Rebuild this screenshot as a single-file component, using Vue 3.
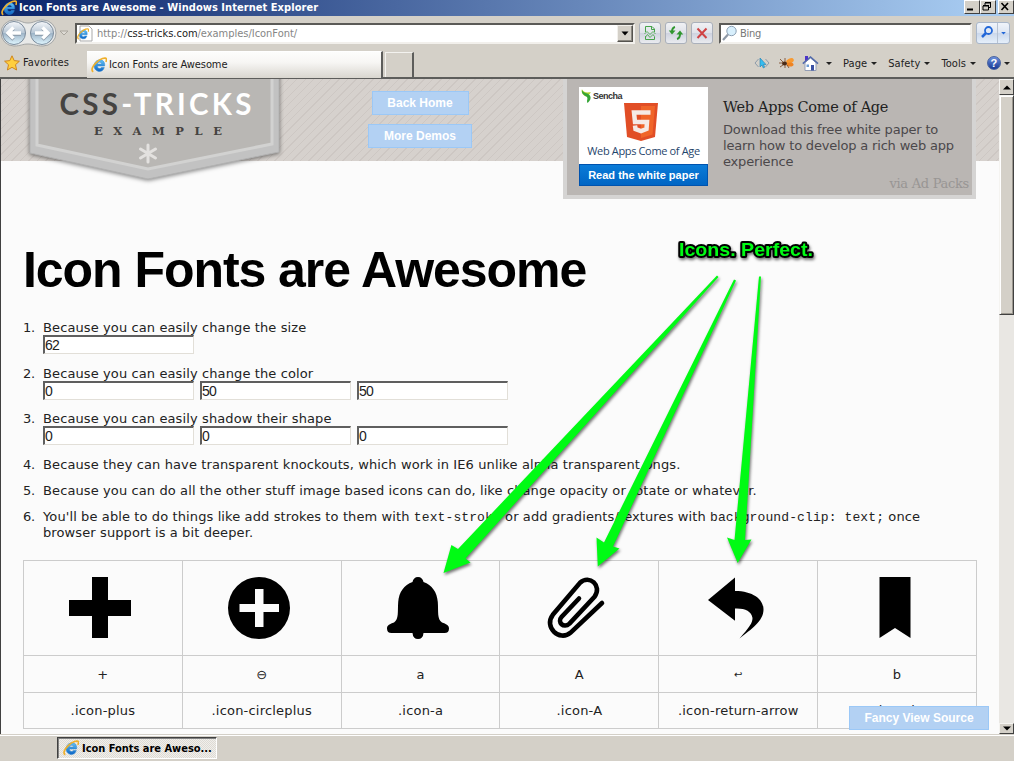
<script setup>
const items = [
  { text: 'Because you can easily change the size', fields: ['62'] },
  { text: 'Because you can easily change the color', fields: ['0', '50', '50'] },
  { text: 'Because you can easily shadow their shape', fields: ['0', '0', '0'] },
  { text: 'Because they can have transparent knockouts, which work in IE6 unlike alpha transparent pngs.' },
  { text: 'Because you can do all the other stuff image based icons can do, like change opacity or rotate or whatever.' },
]
const icons = [
  { key: '+', name: '.icon-plus', d: 'M23 0H39V23H62V39H39V61H23V39H0V23H23Z' },
  { key: '⊖', name: '.icon-circleplus', d: 'M31 0A31 31 0 1 1 31 62A31 31 0 1 1 31 0ZM27 12V27H11.500V35H27V50H35.500V35H51V27H35.500V12Z' },
  { key: 'a', name: '.icon-a', d: 'M31 0C34 0 36 2 36.500 5C45 8 50 15 50.800 25C51.500 35 50 42 55 45.500C59 47 62 48 62 51.500Q62 56 57.500 56H36.500Q36 62 31 62Q26 62 25.500 56H4.500Q0 56 0 51.500C0 48 3 47 7 45.500C12 42 10.500 35 11.200 25C12 15 17 8 25.500 5C26 2 28 0 31 0Z' },
  { key: 'A', name: '.icon-A', stroke: true, d: 'M56 26L24.400 55.800C13.500 65 -2.500 50 6.800 37.800L34 5.800C43.500 -3 56.500 9 48.500 19.800L23.500 46.600C17.500 52 11 45 15.500 40L33 21.500' },
  { key: '↩', name: '.icon-return-arrow', small: true, d: 'M3 23L30 0.500V14C47.500 14 58.500 22 58.500 32.500C58.500 44 46.500 52 34.500 61.500C44.500 50 47.500 46 47.500 41C46.500 34 39.500 31 30 31.500V43.800Z' },
  { key: 'b', name: '.icon-b', d: 'M15.500 0H46.500V61L31 51L15.500 61Z' },
]
const menus = ['Page', 'Safety', 'Tools']
</script>

<template>
  <div class="window">
    <svg class="defs" width="0" height="0">
      <defs>
        <linearGradient id="ieBlue" x1="0" y1="0" x2="0" y2="1">
          <stop offset="0" stop-color="#62c2f5" /><stop offset="1" stop-color="#0b63c4" />
        </linearGradient>
        <symbol id="ie" viewBox="0 0 16 16">
          <path d="M13.600 9H6.300C6.400 11.800 9.600 12.200 10.400 10.500H13.300C12 14.600 8.700 14.800 7 14.300C1.500 12.500 1.800 4.500 7.500 3C11.500 2 14.300 5 13.600 9ZM6.300 7H10.700C10.500 4.600 6.700 4.600 6.300 7Z" fill="url(#ieBlue)" stroke="#2a85d0" stroke-width=".5" />
          <path d="M2.300 14.800C-.3 13.500 1.500 9 5 5.800C9 2 14.800-.5 15.500 2.200C15.700 3 15.200 4.100 14.800 4.800" fill="none" stroke="#efb02c" stroke-width="1.700" />
        </symbol>
      </defs>
    </svg>

    <header class="titlebar">
      <svg class="ico16"><use href="#ie" /></svg>
      <span class="title">Icon Fonts are Awesome - Windows Internet Explorer</span>
      <div class="winbtns">
        <i class="wb"><svg viewBox="0 0 12 11"><path d="M2 8.500H8" stroke="#000" stroke-width="2" /></svg></i>
        <i class="wb"><svg viewBox="0 0 12 11"><path d="M4 2H9.500V6.500H8M4 1.500H10M4 2V4" fill="none" stroke="#000" /><path d="M2 5H7.500V9H2ZM2 4.500H8" fill="none" stroke="#000" /></svg></i>
        <i class="wb close"><svg viewBox="0 0 12 11"><path d="M2.500 2L9 9M9 2L2.500 9" stroke="#000" stroke-width="1.600" /></svg></i>
      </div>
    </header>

    <div class="navbar">
      <svg class="backfwd" viewBox="0 0 58 28">
        <defs>
          <linearGradient id="ball" x1="0" y1="0" x2="0" y2="1">
            <stop offset="0" stop-color="#f6f8fb" /><stop offset=".48" stop-color="#b9c8d6" /><stop offset=".52" stop-color="#9fb5c8" /><stop offset="1" stop-color="#dff6ff" />
          </linearGradient>
        </defs>
        <path d="M14 1C21 1 22 4 28 4S36 1 43 1A13 13 0 0 1 43 27C36 27 34 25 28 25S21 27 14 27A13 13 0 0 1 14 1Z" fill="#e8e9e8" stroke="#a3a5a5" />
        <circle cx="14" cy="14" r="11.500" fill="url(#ball)" stroke="#7c8c9c" />
        <circle cx="42" cy="14" r="11.500" fill="url(#ball)" stroke="#7c8c9c" />
        <path d="M21 14H9M13.500 8.500L8 14L13.500 19.500" class="navarrow" />
        <path d="M35 14H47M42.500 8.500L48 14L42.500 19.500" class="navarrow" />
      </svg>
      <svg class="hist" viewBox="0 0 10 6"><path d="M1 1H9L5 5Z" fill="#dedbd5" stroke="#aaa69e" /></svg>
      <div class="address">
        <svg class="doc" viewBox="0 0 17 17"><path d="M3 1H12L15 4V16H3Z" fill="#fff" stroke="#a9a9a9" /><use href="#ie" x="0" y="3" width="12" height="12" /></svg>
        <span class="url">http://<b>css-tricks.com</b>/examples/IconFont/</span>
        <i class="drop"><svg viewBox="0 0 8 5"><path d="M.5.5H7.500L4 4.500Z" /></svg></i>
      </div>
      <i class="tool"><svg viewBox="0 0 16 16"><path d="M3.500 7V1.500H10L12.500 4V7M9.500 1.500V4.500H12.500M3.500 11V14.500H12.500V11.500" fill="none" stroke="#47a34a" /><path d="M2.500 9L5 6.500L8 9.500L11 6.500L13.500 9M3.500 12L5.500 9.500L8 12.500L11 9.500L12.500 11.500" fill="none" stroke="#5bb05d" /></svg></i>
      <i class="tool"><svg viewBox="0 0 16 16"><path d="M7 2C4.500 2.500 4 4 4 7M9 14C11.500 13.500 12 12 12 9" fill="none" stroke="#2f962f" stroke-width="2" /><path d="M.8 5.500H7.500L4 9.500ZM8.500 9.500H15.200L12 5.500Z" fill="#2f962f" /></svg></i>
      <i class="tool"><svg viewBox="0 0 16 16"><path d="M3.500 3.500L12.500 13M12.500 3.500L3.500 13" stroke="#cf4344" stroke-width="2" /></svg></i>
      <div class="search">
        <svg viewBox="0 0 16 16"><path d="M1 15L6 9.500" stroke="#8d98a6" stroke-width="2.200" /><circle cx="9.500" cy="6" r="4.700" fill="#d8effc" stroke="#8b9fb3" /></svg>
        <span>Bing</span>
      </div>
      <div class="go">
        <svg viewBox="0 0 20 20"><path d="M5 14L9 10" stroke="#2267d8" stroke-width="2.500" /><circle cx="11.500" cy="7.500" r="3.500" fill="none" stroke="#2267d8" stroke-width="1.800" /></svg>
        <svg class="godrop" viewBox="0 0 12 20"><path d="M3.500 9H8.500L6 11.500Z" fill="#2267d8" /></svg>
      </div>
    </div>

    <div class="tabbar">
      <svg class="star" viewBox="0 0 16 16"><path d="M8 .8L10.200 5.600L15.400 6.200L11.500 9.700L12.600 15L8 12.300L3.400 15L4.500 9.700L.6 6.200L5.800 5.600Z" fill="#ffcf3f" stroke="#cf861d" /></svg>
      <span class="fav">Favorites</span>
      <div class="tab"><svg class="ico16"><use href="#ie" /></svg><span>Icon Fonts are Awesome</span></div>
      <div class="newtab"></div>
      <div class="commands">
        <svg class="c1" viewBox="0 0 16 14"><path d="M4.500 3L1 7L4.500 11M11.500 3L15 7L11.500 11" fill="none" stroke="#8e9cab" /><path d="M6 2V11L8 9L9.300 12L10.700 11.300L9.500 8.500H12Z" fill="#35bdf0" stroke="#237db0" stroke-width=".6" /></svg>
        <svg class="c2" viewBox="0 0 16 14"><ellipse cx="11" cy="5" rx="4" ry="2.500" fill="#f89a31" transform="rotate(-25 11 5)" /><ellipse cx="11" cy="8.500" rx="3.500" ry="2" fill="#ee8322" /><ellipse cx="5.500" cy="7.500" rx="2.500" ry="2" fill="#4a2b17" /><path d="M1 3L4 6M0 7H4M1 11L4 9M6 12V9M10 12L8 9M6 2V6" stroke="#77431f" stroke-width=".8" /></svg>
        <svg class="c3" viewBox="0 0 17 17"><path d="M3 7.500L8.500 3L14 7.500V15.500H3Z" fill="#fff" stroke="#929db5" /><path d="M.8 8.700L8.500 2L16 8.700" fill="none" stroke="#536bab" stroke-width="1.600" /><path d="M3 1H6V4L3 6Z" fill="#4d35c6" /><path d="M9 10H12V15.500H9Z" fill="#3a50a3" /><path d="M4.500 9.500H7V12H4.500Z" fill="#6c9bd2" /></svg>
        <i class="caret"></i>
        <template v-for="m in menus" :key="m"><span class="menu">{{ m }}</span><i class="caret"></i></template>
        <i class="help">?</i><i class="caret"></i>
      </div>
    </div>

    <div class="viewport">
      <main class="page">
        <div class="banner">
          <svg class="logo" viewBox="0 0 264 112">
            <path d="M10 -10V74L128 100L259 73V-10Z" class="shield" />
            <path d="M17 -10V66L128 90L252 65V-10Z" fill="#b9b7b4" stroke="#d2d2d1" stroke-width="3" />
            <text x="39.500" y="36" class="brand" textLength="192"><tspan fill="#454341">CSS</tspan><tspan fill="#fff">-TRICKS</tspan></text>
            <text x="74" y="56" class="example" textLength="128">EXAMPLE</text>
            <path d="M128 66V83M120.500 70L135.500 79M135.500 70L120.500 79" class="asterisk" />
          </svg>
          <nav class="links">
            <a class="pill home">Back Home</a>
            <a class="pill demos">More Demos</a>
          </nav>
          <aside class="ad">
            <div class="creative">
              <div class="sencha"><svg viewBox="0 0 12 16"><path d="M1 0C0 5 3 7 6 8C10 5 11 3 11 3C7 4 3 4 1 0Z" fill="#b0d42a" /><path d="M1 1C0 7 7 7 7 10C7 12 6 13 7 15C10 13 12 9 9 6C6 4 3 5 1 1Z" fill="#35a536" /></svg><span>Sencha</span></div>
              <svg class="html5" viewBox="0 0 34 38"><path d="M0 0H34L31 34L17 38L3 34Z" fill="#e14e26" /><path d="M17 3H31L28.500 31.500L17 35Z" fill="#f06529" /><path d="M26.500 9.500H10L11 19H23L22.500 26L17 28L11.500 26L11 22.500" fill="none" stroke="#f5eae6" stroke-width="4.500" /></svg>
              <div class="adname">Web Apps Come of Age</div>
              <div class="cta">Read the white paper</div>
            </div>
            <div class="adcopy">
              <h3>Web Apps Come of Age</h3>
              <p>Download this free white paper to<br>learn how to develop a rich web app<br>experience</p>
              <div class="via">via Ad Packs</div>
            </div>
          </aside>
        </div>

        <h1>Icon Fonts are Awesome</h1>

        <ol class="list">
          <li v-for="(it, i) in items" :key="i">
            <span class="num">{{ i + 1 }}.</span>
            <div>
              <div class="line">{{ it.text }}</div>
              <div v-if="it.fields" class="fields"><span v-for="(f, j) in it.fields" :key="j" class="field">{{ f }}</span></div>
            </div>
          </li>
          <li>
            <span class="num">6.</span>
            <div>
              <div class="line first">You'll be able to do things like add strokes to them with <code>text-stroke</code> or add gradients/textures with <code>background-clip: text;</code> once</div>
              <div class="line">browser support is a bit deeper.</div>
            </div>
          </li>
        </ol>

        <div class="icons">
          <div v-for="ic in icons" :key="ic.name" class="col">
            <div class="cell big"><svg viewBox="0 0 62 62" :class="{ outline: ic.stroke }"><path :d="ic.d" fill-rule="evenodd" /></svg></div>
            <div class="cell key" :class="{ small: ic.small }">{{ ic.key }}</div>
            <div class="cell name">{{ ic.name }}</div>
          </div>
        </div>

        <a class="pill source">Fancy View Source</a>
      </main>
      <div class="scrollbar">
        <i class="sbtn up"><svg viewBox="0 0 8 5"><path d="M0 4.500H8L4 .5Z" /></svg></i>
        <i class="thumb"></i>
        <i class="sbtn down"><svg viewBox="0 0 8 5"><path d="M0 .5H8L4 4.500Z" /></svg></i>
      </div>
    </div>

    <footer class="taskbar">
      <div class="task"><svg class="ico16"><use href="#ie" /></svg><span>Icon Fonts are Aweso...</span></div>
    </footer>

    <svg class="annotation" viewBox="0 0 1014 761">
      <text x="679" y="256" textLength="134" lengthAdjust="spacingAndGlyphs">Icons. Perfect.</text>
      <path d="M717 275.500L458 549L451.400 545L443.500 573L470.500 562.500L465.500 558.500L718.500 277Z" />
      <path d="M734 279.500L604 542.500L596.500 537.500L597.800 566.500L619.500 548.500L613 546.500L736 280.500Z" />
      <path d="M759 276.500L734.500 540L727 537.500L737.700 563L751.500 539.500L745 540L761 276.500Z" />
    </svg>
  </div>
</template>

<style>
body { margin: 0; background: #d4d0c8; overflow: hidden; }
</style>

<style scoped>
* { box-sizing: border-box; }
.window { position: relative; width: 1014px; height: 761px; display: flex; flex-direction: column; background: #d4d0c8; overflow: hidden; font-family: "DejaVu Sans Condensed", "DejaVu Sans", sans-serif; font-size: 11px; color: #222; white-space: nowrap; }
.defs { position: absolute; }
i { font-style: normal; }
svg { display: block; flex: none; }
.ico16 { width: 16px; height: 16px; }
.titlebar { height: 16px; flex: none; display: flex; align-items: center; background: linear-gradient(90deg, #0a246a, #a6caf0 96%); padding-left: 1px; }
.title { font: bold 11px "DejaVu Sans Condensed", sans-serif; color: #fff; margin: -2px 0 0 2px; letter-spacing: .05px; }
.winbtns { margin-left: auto; display: flex; align-self: flex-start; }
.wb { width: 16px; height: 14px; background: #d4d0c8; border: 1px solid; border-color: #fff #404040 #404040 #fff; }
.wb svg { width: 12px; height: 11px; }
.close { margin-left: 2px; }

.navbar { height: 34px; flex: none; display: flex; align-items: center; }
.backfwd { width: 58px; height: 28px; margin-top: 0; }
.navarrow { fill: none; stroke: #fff; stroke-width: 3.500; filter: drop-shadow(0 1px 0 #8796a5); }
.hist { width: 10px; height: 6px; margin-left: 1px; }
.address, .search { height: 21px; background: #fff; border: 2px solid; border-color: #5b5a57 #f2f0ec #f2f0ec #5b5a57; display: flex; align-items: center; }
.address { width: 560px; margin-left: 6px; }
.doc { width: 17px; height: 17px; }
.url { margin-left: 3px; color: #858585; letter-spacing: -.02px; }
.url b { font-weight: normal; color: #222; }
.drop { width: 16px; height: 17px; margin-left: auto; background: #d4d0c8; border: 1px solid; border-color: #f2f0ec #55534f #55534f #f2f0ec; display: grid; place-items: center; box-shadow: inset -1px -1px #8a8780; }
.drop svg, .sbtn svg { width: 8px; height: 5px; }
.tool { width: 22px; height: 22px; margin-left: 4px; border: 1px solid #aab0bb; border-radius: 3px; background: linear-gradient(#f0f1f4, #dfe2e9 50%, #cfd3df 52%, #e9ebef); display: grid; place-items: center; }
.tool svg { width: 16px; height: 16px; }
.search { width: 253px; margin-left: 6px; }
.search svg { width: 16px; height: 16px; margin-left: 1px; }
.search span { color: #777; margin-left: 2px; letter-spacing: -.3px; }
.go { display: flex; width: 34px; height: 22px; margin-left: 4px; border: 1px solid #a9b7cb; border-radius: 3px; background: linear-gradient(#f0f4fa, #dce5f2 50%, #cbd8ec 52%, #e5effa); }
.go svg { width: 20px; height: 20px; }
.go .godrop { width: 12px; border-left: 1px solid #b7c2d2; }

.tabbar { height: 29px; flex: none; display: flex; align-items: flex-start; border-bottom: 2px solid #5d5d5b; }
.star { width: 16px; height: 16px; margin: 5px 0 0 4px; }
.fav { margin: 6px 0 0 3px; width: 64px; letter-spacing: .15px; }
.tab { width: 296px; height: 27px; margin-top: 1px; background: linear-gradient(#fdfdfc, #f7f6f4 40%, #d9d6cf); border-right: 2px solid #5d5d5b; border-top: 1px solid #fff; display: flex; align-items: center; padding: 0 0 1px 4px; }
.tab span { margin-left: 2px; letter-spacing: -.08px; }
.newtab { width: 29px; height: 25px; margin: 2px 0 0 2px; border: 1px solid #f3f2ef; border-right: 2px solid #5d5d5b; border-bottom: 0; }
.commands { display: flex; align-items: center; height: 26px; margin-left: 340px; }
.c1 { width: 16px; height: 14px; }
.c2 { width: 16px; height: 14px; margin-left: 9px; }
.c3 { width: 17px; height: 17px; margin-left: 7px; }
.caret { width: 0; height: 0; border: 3px solid transparent; border-top-color: #222; border-bottom: 0; margin-left: 4px; flex: none; }
.c3 + .caret { margin-left: 7px; }
.menu { margin-left: 11px; letter-spacing: .08px; }
.help { width: 14px; height: 14px; border-radius: 7px; margin-left: 11px; background: linear-gradient(#6c90dc, #173895); border: 1px solid #49639f; color: #fff; font: bold 11px/12px "Liberation Sans", sans-serif; text-align: center; }
.help + .caret { margin-left: 3px; }

.viewport { height: 655px; flex: none; display: flex; border-left: 1px solid #404040; background: #fbfbfb; }
.page { position: relative; width: 998px; height: 655px; overflow: hidden; background: #fbfbfb; flex: none; }
.banner { height: 82px; background: repeating-linear-gradient(135deg, #d6d1cd 0 5px, #cdc7c3 5px 6px); display: flex; align-items: flex-start; }
.logo { width: 264px; height: 112px; margin-left: 19px; overflow: hidden; }
.shield { fill: #c2c2c2; stroke: #b2b2b2; stroke-width: 1; filter: drop-shadow(0 1px 2px rgba(0,0,0,.5)); }
.brand { font: bold 29.500px Lato, sans-serif; }
.example { font: bold 11.500px "DejaVu Serif", serif; fill: #454341; }
.asterisk { stroke: #e3e1df; stroke-width: 3; stroke-linecap: round; }
.links { width: 104px; margin: 12px 0 0 84px; display: flex; flex-direction: column; align-items: center; gap: 9px; }
.pill { display: block; height: 24px; border: 1px solid #9bc8f7; background: #b3d1f3; color: #fff; font: bold 12px/23px "Liberation Sans", sans-serif; text-align: center; }
.home { width: 97px; }
.demos { width: 104px; }
.source { position: absolute; right: 10px; bottom: 4px; width: 140px; }
.ad { width: 413px; height: 120px; margin-left: 91px; background: #bab6b3; border: 4px solid #d5d4d3; border-top: 0; display: flex; }
.creative { width: 129px; height: 99px; margin: 8px 0 0 12px; background: #fff; flex: none; display: flex; flex-direction: column; align-items: center; }
.sencha { height: 16px; width: 100%; display: flex; padding: 2px 0 0 2px; }
.sencha svg { width: 11px; height: 15px; }
.sencha span { font: bold 9px "Liberation Sans", sans-serif; color: #333; margin: 2px 0 0 1px; letter-spacing: -.5px; }
.html5 { width: 34px; height: 38px; margin: 0 6px 0 0; }
.adname { font: 11px/20px "Open Sans", sans-serif; color: #1f456b; letter-spacing: -.35px; height: 23px; }
.cta { height: 22px; width: 100%; background: linear-gradient(#0b7cd8, #0065c4); border: 1px solid #0053ae; color: #fff; font: bold 11px/21px "Liberation Sans", sans-serif; text-align: center; }
.adcopy { flex: 1; padding: 18px 3px 0 15px; }
h3 { margin: 0; font: 14.500px/20px "DejaVu Serif", serif; letter-spacing: -.3px; color: #222; }
.adcopy p { margin: 5px 0 0; font: 13px/16px "DejaVu Sans", sans-serif; letter-spacing: -.18px; color: #4b484b; }
.via { text-align: right; font: 13px/16px "DejaVu Serif", serif; letter-spacing: -.28px; color: #989593; margin-top: 6px; }
h1 { margin: 80px 0 0 22px; font: bold 50px/58px "Liberation Sans", sans-serif; color: #000; letter-spacing: -1.050px; }
.list { list-style: none; margin: 20px 0 0 22px; padding: 0; font: 13px/18px "DejaVu Sans", sans-serif; letter-spacing: .110px; color: #222; display: flex; flex-direction: column; gap: 10px; }
.list li { display: flex; }
.num { width: 20px; height: 16px; flex: none; letter-spacing: -.3px; }
.line { height: 16px; }
.first { height: 16.500px; }
.line code { font: 13px/16px "Liberation Mono", monospace; }
.fields { display: flex; gap: 6px; height: 19.500px; }
.field { width: 151px; height: 19px; background: #fff; border: 2px solid; border-color: #5f5f5f #e2dfd8 #e2dfd8 #5f5f5f; border-right-width: 1px; border-bottom-width: 1px; font: 14px/16px "Liberation Sans", sans-serif; letter-spacing: -.9px; }
.icons { display: flex; margin: 20px 0 0 22px; width: 954px; border: 1px solid #ccc; border-right: 0; border-bottom: 0; }
.col { flex: 1; border-right: 1px solid #ccc; }
.cell { height: 36.500px; border-bottom: 1px solid #ccc; display: flex; align-items: center; justify-content: center; padding-top: 1px; font: 13px "DejaVu Sans", sans-serif; letter-spacing: .2px; }
.cell.small { font-size: 10px; }
.cell.big { height: 95px; padding: 0 5px 0 0; }
.cell svg { width: 62px; height: 62px; overflow: visible; }
.outline { fill: none; stroke: #000; stroke-width: 4.600; stroke-linecap: round; }
.scrollbar { width: 15px; height: 655px; flex: none; background: #e9e7e3; display: flex; flex-direction: column; }
.sbtn { height: 16px; background: #d4d0c8; border: 1px solid; border-color: #f5f4f1 #404040 #404040 #f5f4f1; display: grid; place-items: center; flex: none; }
.thumb { height: 220px; background: #d4d0c8; border: 1px solid; border-color: #f5f4f1 #404040 #404040 #f5f4f1; box-shadow: inset 1px 1px #fff, inset -1px -1px #9b978f; flex: none; }
.down { height: 11px; margin-top: auto; }
.taskbar { flex: 1; border-top: 1px solid #d4d0c8; box-shadow: inset 0 1px #fff; display: flex; padding: 2px 0 0 57px; }
.task { width: 160px; height: 22px; border: 1px solid; border-color: #404040 #fff #fff #404040; box-shadow: inset 1px 1px #808080; background: repeating-conic-gradient(#f1efeb 0 25%, #dedbd5 0 50%) 0 0 / 2px 2px; display: flex; align-items: center; padding-left: 5px; color: #000; }
.task span { margin-left: 3px; font: bold 11px "DejaVu Sans Condensed", sans-serif; letter-spacing: -.02px; }
.annotation { position: absolute; inset: 0; width: 1014px; height: 761px; fill: #00fb14; filter: drop-shadow(1px 2px 1.500px rgba(0,0,0,.55)); pointer-events: none; }
.annotation text { font: bold 19px "Liberation Sans", sans-serif; stroke: #000; stroke-width: 4px; paint-order: stroke; stroke-linejoin: round; }
</style>
